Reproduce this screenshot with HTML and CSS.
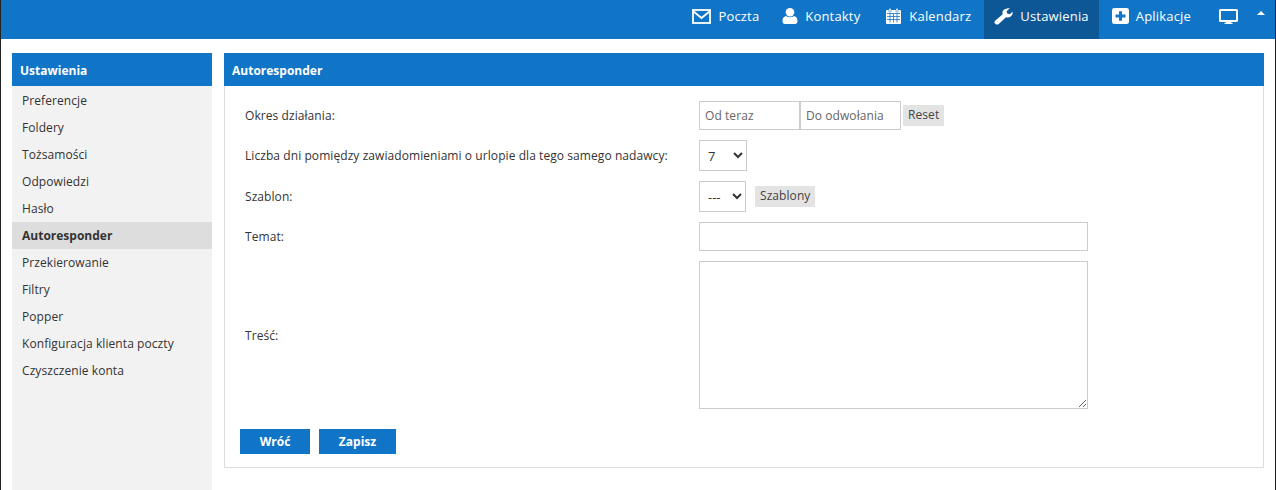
FILE: index.html
```html
<!DOCTYPE html>
<html lang="pl">
<head>
<meta charset="utf-8">
<title>Autoresponder</title>
<link rel="stylesheet" href="styles.css">
</head>
<body>
<div class="app">
  <header class="topbar">
    <nav class="nav">
      <a class="nav-item"><svg class="ico" width="19" height="15" viewBox="0 0 19 15"><rect x="1" y="1" width="17" height="13" fill="none" stroke="#fff" stroke-width="1.8"/><path d="M1.500 2.500l8 6.500 8-6.500" fill="none" stroke="#fff" stroke-width="1.800"/></svg>Poczta</a>
      <a class="nav-item"><svg class="ico" width="16" height="16" viewBox="0 0 16 16"><ellipse cx="8" cy="4.200" rx="4.300" ry="4.200" fill="#fff"/><path d="M.5 13c0-3 1-4.300 3.500-5 1 .8 2.500 1.200 4 1.200s3-.4 4-1.200c2.500.7 3.500 2 3.500 5 0 2-1 3-2.500 3H3C1.500 16 .5 15 .5 13z" fill="#fff"/></svg>Kontakty</a>
      <a class="nav-item nav-cal"><svg class="ico" width="17" height="16" viewBox="0 0 17 16"><path d="M2 2h13a1 1 0 0 1 1 1v12a1 1 0 0 1-1 1H2a1 1 0 0 1-1-1V3a1 1 0 0 1 1-1z" fill="#fff"/><rect x="4" y="0.300" width="2" height="3.700" fill="#fff" stroke="#1175c7" stroke-width=".5"/><rect x="11" y="0.300" width="2" height="3.700" fill="#fff" stroke="#1175c7" stroke-width=".5"/><path d="M2 5.500h13M2 8.500h13M2 11.500h13M5 5.500v9M8.500 5.500v9M12 5.500v9" stroke="#1175c7" stroke-width=".8" fill="none"/></svg>Kalendarz</a>
      <a class="nav-item is-active"><svg class="ico" width="19" height="17" viewBox="0 0 19 19" preserveAspectRatio="none"><path d="M18.600 4.200c.3 2-.3 3.800-1.600 5-1.400 1.300-3.300 1.700-5 1.100l-7.300 7.500c-.9.900-2.300.9-3.200 0l-.4-.4c-.9-.9-.9-2.300 0-3.200l7.600-7.200c-.6-1.700-.2-3.700 1.100-5C12.100.700 13.900.100 15.800.400l-3.200 3.300.6 2.500 2.500.7z" fill="#fff"/></svg>Ustawienia</a>
      <a class="nav-item"><svg class="ico" width="17" height="16" viewBox="0 0 17 17" preserveAspectRatio="none"><path d="M2.500 0h12A2.500 2.500 0 0 1 17 2.500v12a2.500 2.500 0 0 1-2.500 2.500h-12A2.500 2.500 0 0 1 0 14.500v-12A2.500 2.500 0 0 1 2.500 0zM7 3.500V7H3.500v3H7v3.500h3V10h3.500V7H10V3.500z" fill="#fff" fill-rule="evenodd"/></svg>Aplikacje</a>
      <a class="nav-item nav-screen"><svg width="19" height="15" viewBox="0 0 19 15"><path d="M1.500 0h16A1.500 1.500 0 0 1 19 1.500v10a1.500 1.500 0 0 1-1.500 1.500H12v.8h1.500V15h-8v-1.200H7V13H1.500A1.500 1.500 0 0 1 0 11.500v-10A1.500 1.500 0 0 1 1.500 0zM2 2v9h15V2z" fill="#fff" fill-rule="evenodd"/></svg></a>
      <a class="nav-caret"><svg width="8" height="4" viewBox="0 0 8 4"><path d="M4 0l4 4H0z" fill="#fff"/></svg></a>
    </nav>
  </header>
  <div class="layout">
    <aside class="sidebar">
      <h2 class="bar">Ustawienia</h2>
      <ul class="menu">
        <li class="menu-item">Preferencje</li>
        <li class="menu-item">Foldery</li>
        <li class="menu-item">Tożsamości</li>
        <li class="menu-item">Odpowiedzi</li>
        <li class="menu-item">Hasło</li>
        <li class="menu-item is-current">Autoresponder</li>
        <li class="menu-item">Przekierowanie</li>
        <li class="menu-item">Filtry</li>
        <li class="menu-item">Popper</li>
        <li class="menu-item">Konfiguracja klienta poczty</li>
        <li class="menu-item">Czyszczenie konta</li>
      </ul>
    </aside>
    <main class="main">
      <h2 class="bar">Autoresponder</h2>
      <form class="panel">
        <div class="rows">
          <label class="lbl">Okres działania:</label>
          <div class="ctl">
            <div class="dates">
              <input class="field date" type="text" placeholder="Od teraz">
              <input class="field date" type="text" placeholder="Do odwołania">
            </div>
            <button class="mini mini-reset" type="button">Reset</button>
          </div>
          <label class="lbl">Liczba dni pomiędzy zawiadomieniami o urlopie dla tego samego nadawcy:</label>
          <div class="ctl">
            <select class="sel sel-days"><option>7</option></select>
          </div>
          <label class="lbl">Szablon:</label>
          <div class="ctl">
            <select class="sel sel-tpl"><option>---</option></select>
            <button class="mini mini-tpl" type="button">Szablony</button>
          </div>
          <label class="lbl">Temat:</label>
          <div class="ctl">
            <input class="field wide" type="text">
          </div>
          <label class="lbl">Treść:</label>
          <div class="ctl">
            <textarea class="area"></textarea>
          </div>
        </div>
        <div class="actions">
          <button class="btn btn-back" type="button">Wróć</button>
          <button class="btn btn-save" type="button">Zapisz</button>
        </div>
      </form>
    </main>
  </div>
</div>
</body>
</html>
```
FILE: styles.css
```css
* { box-sizing: border-box; }
html, body { margin: 0; height: 100%; }
body {
  font-family: "Open Sans", "Noto Sans", sans-serif;
  font-size: 12px;
  letter-spacing: 0.073px;
  color: #333;
  background: #222;
  overflow: hidden;
}
.app {
  height: 490px;
  margin: 0 1px 0 1px;
  background: #fff;
  display: flex;
  flex-direction: column;
}
.topbar {
  height: 39px;
  background: #1175c7;
  display: flex;
  justify-content: flex-end;
}
.nav { display: flex; align-items: stretch; }
.nav-item {
  display: flex;
  align-items: center;
  padding: 0 10px 7px;
  margin-left: 3px;
  color: #fff;
  font-size: 13px;
  letter-spacing: 0.18px;
}
.nav-item .ico { margin-right: 7px; }
.nav-item.is-active { background: #0e5796; }
.nav-cal { margin-left: 5px; }
.nav-screen { margin-left: 8px; }
.nav-caret { display: flex; align-items: flex-start; padding: 11px 10px 0 9px; }
.layout {
  flex: 1;
  display: flex;
  gap: 12px;
  padding: 14px 11px 0 11px;
}
.bar {
  margin: 0;
  height: 33px;
  line-height: 33px;
  padding: 1px 8px 0;
  background: #1175c7;
  color: #fff;
  font-size: 12px;
  font-weight: 700;
  letter-spacing: 0;
}
.sidebar {
  width: 200px;
  background: #f2f2f2;
}
.menu { list-style: none; margin: 1px 0 0; padding: 0; }
.menu-item {
  height: 27px;
  line-height: 27px;
  padding: 0 10px;
  color: #333;
}
.menu-item.is-current { background: #ddd; font-weight: 700; letter-spacing: 0; }
.main { width: 1040px; align-self: flex-start; }
.panel {
  height: 382px;
  border: 1px solid #ddd;
  border-top: 0;
  padding: 15px 15px 0;
  background: #fff;
}
.rows {
  display: grid;
  grid-template-columns: 454px 1fr;
  row-gap: 10px;
  align-items: center;
  padding-left: 5px;
}
.lbl { display: block; }
.ctl { display: flex; align-items: center; }
.dates { display: flex; }
.field {
  font: inherit;
  letter-spacing: inherit;
  color: #333;
  border: 1px solid #ccc;
  background: #fff;
  height: 29px;
  padding: 0 5px;
  outline: 0;
  border-radius: 0;
}
.field::placeholder { color: #666; opacity: 1; }
.date { width: 101px; }
.mini {
  font: inherit;
  letter-spacing: inherit;
  color: #444;
  height: 21px;
  border: 0;
  border-radius: 0;
  background: #e3e3e3;
  padding: 0 5px 2px;
}
.mini-reset { margin-left: 2px; }
.mini-tpl { margin-left: 9px; }
.sel {
  font: inherit;
  font-size: 13px;
  color: #333;
  height: 31px;
  background: #fff;
  border: 1px solid #ccc;
  border-radius: 0;
  outline: 0;
  padding: 0 0 0 4px;
}
.sel-days { width: 48px; }
.sel-tpl { width: 47px; }
.wide { width: 389px; }
.area {
  display: block;
  font: inherit;
  width: 389px;
  height: 148px;
  border: 1px solid #ccc;
  border-radius: 0;
  outline: 0;
  background: #fff;
}
.actions {
  display: flex;
  gap: 9px;
  margin-top: 20px;
}
.btn {
  font: inherit;
  font-weight: 700;
  letter-spacing: 0;
  color: #fff;
  height: 25px;
  border: 0;
  border-radius: 0;
  background: #1175c7;
  padding: 0;
}
.btn-back { width: 70px; }
.btn-save { width: 77px; }
```
